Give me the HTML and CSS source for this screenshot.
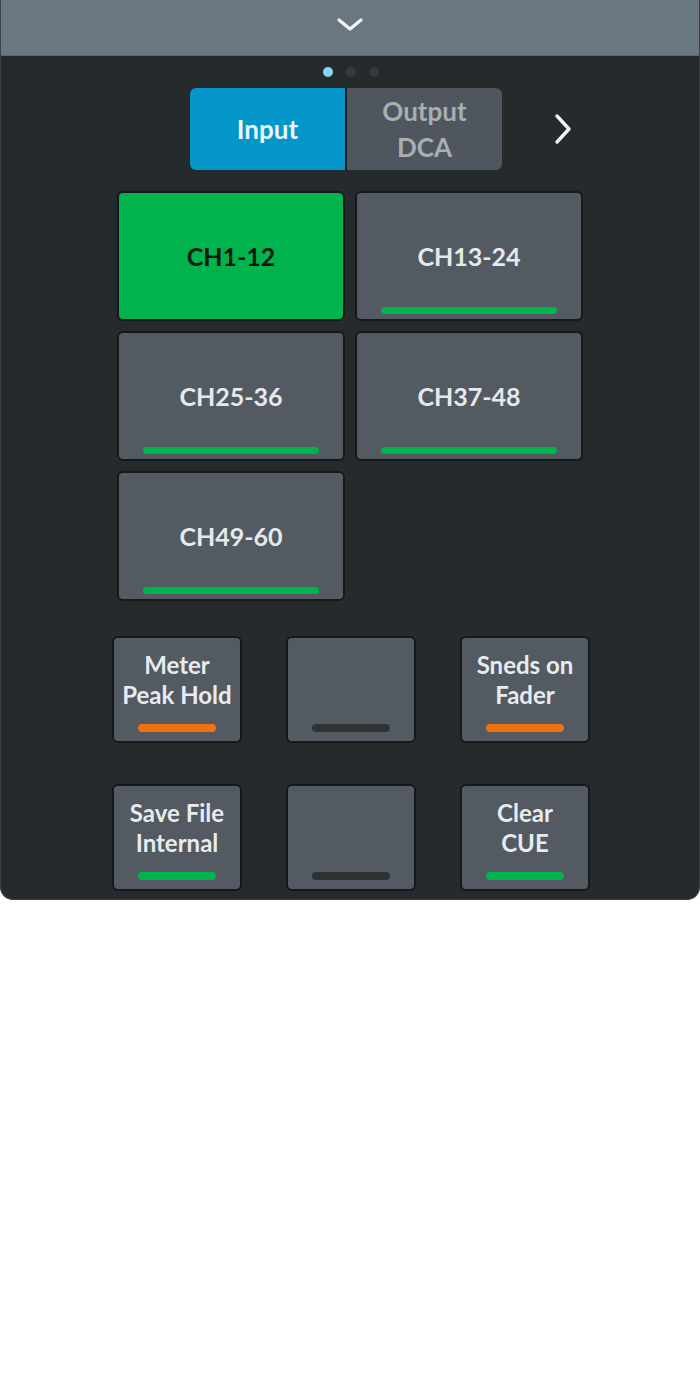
FILE: index.html
```html
<!DOCTYPE html>
<html>
<head>
<meta charset="utf-8">
<link rel="stylesheet" href="styles.css">
</head>
<body>
<div class="panel">
  <div class="topbar">
    <svg class="chev-down" width="28" height="16" viewBox="0 0 28 16"><path d="M3 3 L14 12 L25 3" fill="none" stroke="#f2f4f6" stroke-width="3.2" stroke-linecap="round" stroke-linejoin="round"/></svg>
  </div>
  <div class="dots">
    <span class="dot active"></span><span class="dot"></span><span class="dot"></span>
  </div>
  <div class="tabrow">
    <div class="tabs">
      <div class="tab tab-on">Input</div>
      <div class="tab tab-off">Output<br>DCA</div>
    </div>
    <svg class="chev-right" width="22" height="34" viewBox="0 0 22 34"><path d="M5 4 L17 17 L5 30" fill="none" stroke="#f2f4f6" stroke-width="3.4" stroke-linecap="round" stroke-linejoin="round"/></svg>
  </div>
  <div class="chgrid">
    <div class="ch ch-on"><span class="ch-label">CH1-12</span><span class="bar bar-none"></span></div>
    <div class="ch"><span class="ch-label">CH13-24</span><span class="bar bar-green"></span></div>
    <div class="ch"><span class="ch-label">CH25-36</span><span class="bar bar-green"></span></div>
    <div class="ch"><span class="ch-label">CH37-48</span><span class="bar bar-green"></span></div>
    <div class="ch"><span class="ch-label">CH49-60</span><span class="bar bar-green"></span></div>
  </div>
  <div class="keys">
    <div class="key"><span class="key-label">Meter<br>Peak Hold</span><span class="kbar kbar-orange"></span></div>
    <div class="key"><span class="key-label"></span><span class="kbar kbar-dark"></span></div>
    <div class="key"><span class="key-label">Sneds on<br>Fader</span><span class="kbar kbar-orange"></span></div>
    <div class="key"><span class="key-label">Save File<br>Internal</span><span class="kbar kbar-green"></span></div>
    <div class="key"><span class="key-label"></span><span class="kbar kbar-dark"></span></div>
    <div class="key"><span class="key-label">Clear<br>CUE</span><span class="kbar kbar-green"></span></div>
  </div>
</div>
</body>
</html>
```
FILE: styles.css
```css
html, body {
  margin: 0;
  padding: 0;
  background: #ffffff;
}
body {
  font-family: "Lato", "Open Sans", sans-serif;
}
.panel {
  width: 700px;
  height: 900px;
  box-sizing: border-box;
  background: #252a2d;
  border-radius: 0 0 13px 13px;
  border: 1px solid #3a4045;
  border-top: none;
  overflow: hidden;
}
.topbar {
  height: 56px;
  background: #6a7781;
  border-bottom: 1px solid #5a646c;
  box-sizing: border-box;
  display: flex;
  justify-content: center;
  padding-top: 17px;
}
.chev-down {
  display: block;
}
.dots {
  display: flex;
  justify-content: center;
  gap: 13px;
  margin-top: 11px;
  height: 10px;
  padding-left: 1px;
}
.dot {
  width: 10px;
  height: 10px;
  border-radius: 50%;
  background: #343a3f;
}
.dot.active {
  background: #86d4f2;
}
.tabrow {
  display: flex;
  align-items: center;
  margin-top: 11px;
  padding-left: 189px;
}
.tabs {
  display: flex;
  gap: 2px;
  background: #1b1f22;
  border-radius: 6px;
}
.tab {
  width: 155px;
  height: 82px;
  display: flex;
  align-items: center;
  justify-content: center;
  text-align: center;
  font-weight: 700;
  font-size: 26px;
  line-height: 36px;
}
.tab-on {
  background: #0596c9;
  color: #eaf6fb;
  border-radius: 6px 0 0 6px;
}
.tab-off {
  background: #4f565e;
  color: #a9aeb3;
  border-radius: 0 6px 6px 0;
}
.chev-right {
  margin-left: 50px;
  display: block;
}
.chgrid {
  display: grid;
  grid-template-columns: 228px 228px;
  grid-auto-rows: 130px;
  column-gap: 10px;
  row-gap: 10px;
  margin-top: 21px;
  padding-left: 116px;
}
.ch {
  box-sizing: border-box;
  background: #535a62;
  border: 2px solid #16191b;
  border-radius: 6px;
  display: flex;
  flex-direction: column;
  align-items: center;
  padding-top: 12px;
}
.ch-on {
  background: #00b34c;
}
.ch-label {
  flex: 1;
  display: flex;
  align-items: center;
  font-weight: 700;
  font-size: 25px;
  color: #e6e9ec;
}
.ch-on .ch-label {
  color: #0c1a10;
}
.bar {
  width: 176px;
  height: 7px;
  border-radius: 4px;
  margin-bottom: 5px;
}
.bar-green { background: #00b34c; }
.bar-none { background: transparent; }
.keys {
  display: grid;
  grid-template-columns: 130px 130px 130px;
  grid-auto-rows: 107px;
  column-gap: 44px;
  row-gap: 41px;
  margin-top: 35px;
  padding-left: 111px;
}
.key {
  box-sizing: border-box;
  background: #535a62;
  border: 2px solid #16191b;
  border-radius: 6px;
  display: flex;
  flex-direction: column;
  align-items: center;
  padding-top: 12px;
}
.key-label {
  flex: 1;
  text-align: center;
  font-weight: 700;
  font-size: 24px;
  line-height: 30px;
  color: #e8ebee;
  white-space: nowrap;
}
.kbar {
  width: 78px;
  height: 8px;
  border-radius: 4px;
  margin-bottom: 9px;
}
.kbar-orange { background: #f1700f; }
.kbar-green { background: #00b34c; }
.kbar-dark { background: #2e3235; }
```
